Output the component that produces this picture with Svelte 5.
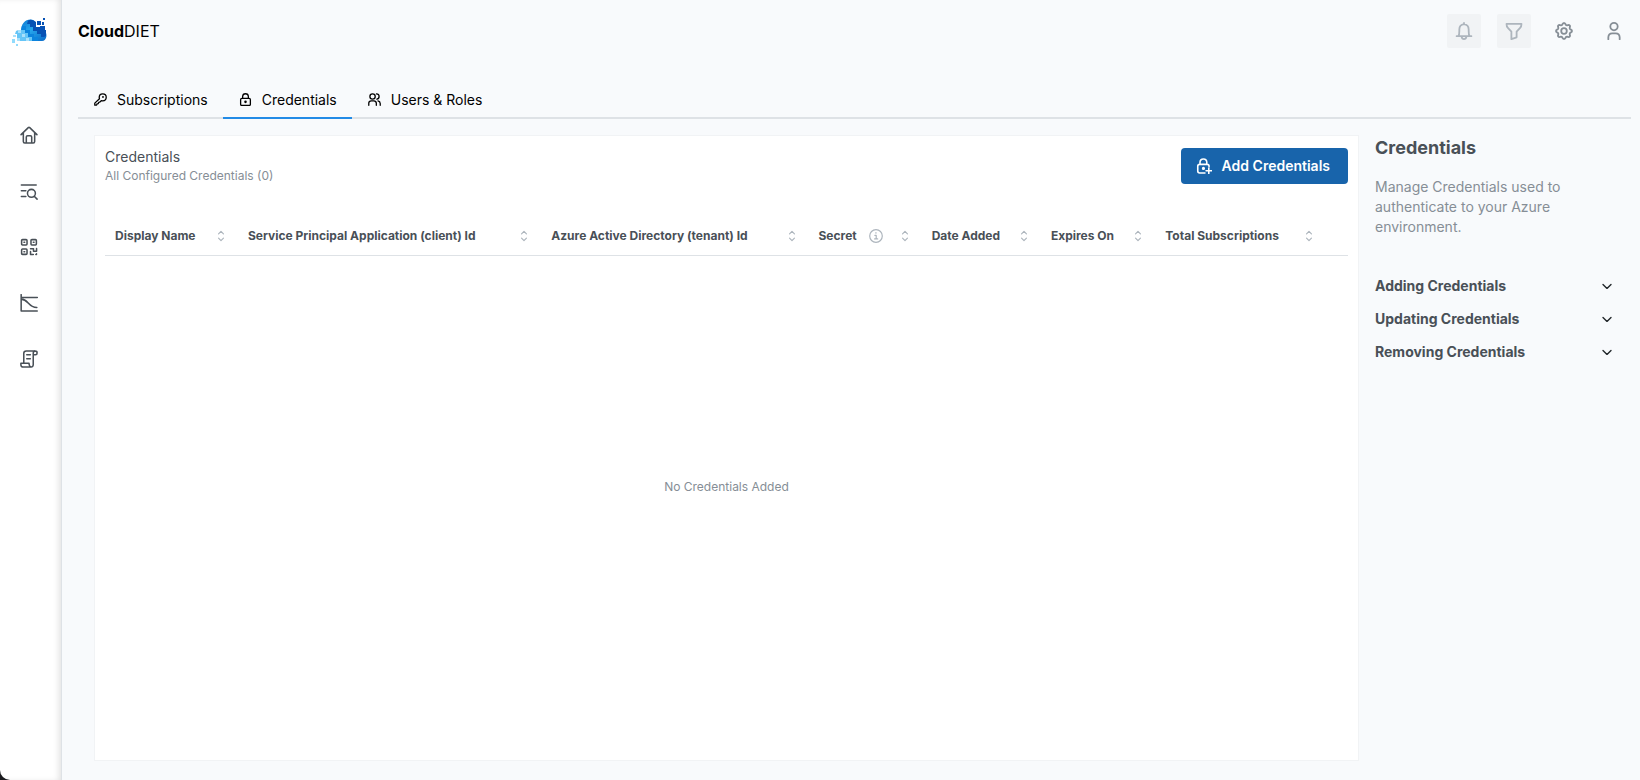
<script>
  const columns = [
    { label: 'Display Name', width: 10.7 },
    { label: 'Service Principal Application (client) Id', width: 24.4 },
    { label: 'Azure Active Directory (tenant) Id', width: 21.5 },
    { label: 'Secret', width: 9.1, info: true },
    { label: 'Date Added', width: 9.6 },
    { label: 'Expires On', width: 9.2 },
    { label: 'Total Subscriptions', width: 13.7 }
  ];
  const tabs = [
    { label: 'Subscriptions', icon: 'key' },
    { label: 'Credentials', icon: 'lock' },
    { label: 'Users & Roles', icon: 'users' }
  ];
  const nav = [
    { label: 'Home', icon: 'home' },
    { label: 'Search', icon: 'search' },
    { label: 'Resources', icon: 'grid' },
    { label: 'Trends', icon: 'trend' },
    { label: 'Reports', icon: 'scroll' }
  ];
  const actions = [
    { label: 'Notifications', icon: 'bell', disabled: true },
    { label: 'Filter', icon: 'funnel', disabled: true },
    { label: 'Settings', icon: 'gear' },
    { label: 'Account', icon: 'user' }
  ];
  const topics = ['Adding Credentials', 'Updating Credentials', 'Removing Credentials'];
  let active = $state('Credentials');

  // Scalloped outline of the settings gear: eight rounded teeth
  const gear = (() => {
    let d = '';
    for (let i = 0; i <= 64; i++) {
      const a = (i / 64) * Math.PI * 2;
      const r = 7.9 + 0.9 * Math.tanh(2 * Math.cos(8 * a));
      d += (i ? 'L' : 'M') + (10 + r * Math.sin(a)).toFixed(2) + ' ' + (10 - r * Math.cos(a)).toFixed(2);
    }
    return d + 'Z';
  })();
</script>

{#snippet icon(name)}
  <svg class="icon {name}" viewBox="0 0 20 20" aria-hidden="true">
    {#if name === 'home'}
      <path d="M1.2 9.6 9.2 1.8Q10 1.1 10.8 1.8L18.8 9.6M3.7 7.6V17.2Q3.7 18.8 5.3 18.8H14.7Q16.3 18.8 16.3 17.2V7.6M7 18.8V12.3Q7 10.8 8.5 10.8H11.5Q13 10.8 13 12.3V18.8" />
    {:else if name === 'search'}
      <path d="M1.5 3.3H18M1.5 9.8H6.5M1.5 16.2H6.5M15.8 15.8 19 19" /><circle cx="12.7" cy="12.6" r="4.4" />
    {:else if name === 'grid'}
      <rect x="1.8" y="1.8" width="6" height="6" rx="1" /><rect x="12.2" y="1.8" width="6" height="6" rx="1" /><rect x="1.8" y="12.2" width="6" height="6" rx="1" />
      <path d="M4.4 4.8H5.2M14.8 4.8H15.6M4.4 15.2H5.2M11.7 12H15V14.6H18.4V11.8M11.7 15V18.3H14.8M18.3 17.6V18.3H17.6" />
    {:else if name === 'trend'}
      <path d="M1.3 .7V18.9H19.2M1.3 3.8H19.2M1.3 5.7C9.5 5.7 8.8 14.9 18.7 15" />
    {:else if name === 'scroll'}
      <path d="M4.2 14.5V3.6Q4.2 1 7 1H16.6M16.8 1Q14.7 1.2 14.7 3.6V16.4Q14.5 19 12.4 19M14.9 5.2H17.3Q19 5.2 19 3.2Q19 1 16.8 1M12.4 19Q10.5 18.8 10.2 16.3L10 14.6H1V16.7Q1.1 19 3.5 19H12.4M7.5 5.3H11.5M7.5 9.7H11.5" />
    {:else if name === 'bell'}
      <path d="M1.8 15.7H18.2M3.8 15.7Q4.8 14.5 4.8 10V8.4Q4.8 3 10 2.4Q15.2 3 15.2 8.4V10Q15.2 14.5 16.2 15.7M7.3 16.2Q7.8 19 10 19Q12.2 19 12.7 16.2M10 1V2.4" />
    {:else if name === 'funnel'}
      <path d="M1.7 2H18.3Q18.4 5 16.8 6.6L12.9 10.8V17L7.1 19V10.8L3.2 6.6Q1.6 5 1.7 2Z" />
    {:else if name === 'gear'}
      <path d={gear} /><circle cx="10" cy="10" r="3.1" />
    {:else if name === 'user'}
      <circle cx="10" cy="5.1" r="4.1" /><path d="M3.7 19.2V17Q3.9 12.8 8 12.7H12Q16.1 12.8 16.3 17V19.2" />
    {:else if name === 'key'}
      <path d="M8 6.8C8 3.4 10.4 1.2 13.4 1.2C16.6 1.2 18.8 3.4 18.8 6.6C18.8 9.8 16.6 12 13.4 12L11.2 11.8 8.6 14.2 7.2 14.4 6.6 16.4 4.6 16.8 4 18.6 1.2 18.8V15.6L8.4 8.8Z" /><circle cx="13.8" cy="6.3" r=".5" />
    {:else if name === 'lock'}
      <rect x="2.5" y="8.2" width="15" height="11" rx="2" /><path d="M5.6 8V5.5C5.8-.3 14.2-.3 14.4 5.5V8" /><circle cx="10" cy="13.6" r="1" />
    {:else if name === 'users'}
      <circle cx="7" cy="5.3" r="4.1" /><path d="M1.2 19V15.5C1.4 12.5 3.5 12 5 12H9C11.5 12 12.6 13.5 12.8 15.5V19M13 1.3C18.2 1 18.4 8.8 13.6 9.4M15.3 12Q18.7 12.8 18.8 16V19" />
    {:else if name === 'lockadd'}
      <path d="M11.2 18.7H4.5Q2.2 18.7 2.2 16.4V10.3Q2.2 8 4.5 8H14Q16.3 8 16.3 10.3V11M5 8V5.4C5.2-.2 13.3-.2 13.5 5.4V8M16 12.6V19.4M12.6 16H19.4" /><circle cx="9.3" cy="13" r="1" />
    {:else if name === 'sort'}
      <path d="M6.5 7 10 3.5 13.5 7M6.5 13 10 16.5 13.5 13" />
    {:else if name === 'info'}
      <circle cx="10" cy="10" r="9" /><path d="M8.3 9H10.3V14M8 14.2H12.4M9.6 5.6H10.2" />
    {:else if name === 'chevron'}
      <path d="M5 8 10 13 15 8" />
    {/if}
  </svg>
{/snippet}

<div class="shell">
  <nav class="sidebar" aria-label="Main">
    <a class="logo" href="#home" aria-label="CloudDIET">
      <svg viewBox="10 16 38 32" aria-hidden="true">
        <defs>
          <linearGradient id="sky" x1="0" y1="0" x2="1" y2="1">
            <stop offset="0" stop-color="#0a73cf" /><stop offset=".45" stop-color="#27a7ed" /><stop offset="1" stop-color="#0869c8" />
          </linearGradient>
        </defs>
        <path fill="url(#sky)" d="M21 31C21 24 25 19.5 30.5 19.5C33 19.5 35 21 36 23L39 27 44 30C48 33 47 41 42 41H25L19 37Z" />
        <path fill="#0752b5" d="M28 20.4Q32 18.6 36 22V23L39 26H44V30H46V36L44 37H41V34H37V31H33V27H30V24H27Z" />
        <path fill="#0c84de" d="M22 26H26V30H30V34H34V37H38V41H32V38H28V34H23V31H21Z" />
        <path fill="#fff" d="M36 18H46V30H40V27H36Z" />
        <path fill="#0752b5" d="M37 21H41V25H37ZM42 22H44V25H42ZM40 26H45V30H40ZM43 18H45V20H43Z" />
        <path fill="#65c5f7" d="M16 31Q18 29.5 21 30H25V33H28V37H32V41H20V38H17V34H15Z" />
        <path fill="#a9e0fb" d="M18 30H21V33H18ZM22 34H25V37H22ZM17 38H20V41H17ZM26 38H29V41H26ZM13 35H16V37H13Z" />
        <path fill="#91dbfc" d="M12 39H15V43H12ZM16 44H18V46H16Z" />
      </svg>
    </a>
    <div class="links">
      {#each nav as item}
        <a href="#{item.icon}" aria-label={item.label}>{@render icon(item.icon)}</a>
      {/each}
    </div>
  </nav>

  <div class="page">
    <header>
      <h1>Cloud<span>DIET</span></h1>
      <div class="actions">
        {#each actions as action}
          <button type="button" aria-label={action.label} disabled={action.disabled}>{@render icon(action.icon)}</button>
        {/each}
      </div>
    </header>

    <div class="tabs" role="tablist">
      {#each tabs as tab}
        <button type="button" role="tab" aria-selected={active === tab.label} onclick={() => (active = tab.label)}>
          {@render icon(tab.icon)}{tab.label}
        </button>
      {/each}
    </div>

    <div class="content">
      <main>
        <div class="top">
          <div>
            <h2>Credentials</h2>
            <p>All Configured Credentials (0)</p>
          </div>
          <button class="add" type="button">{@render icon('lockadd')}Add Credentials</button>
        </div>
        <table>
          <colgroup>
            {#each columns as col}<col style="width: {col.width}%" />{/each}
            <col />
          </colgroup>
          <thead>
            <tr>
              {#each columns as col}
                <th scope="col">
                  <div class="head">
                    <span>{col.label}</span>
                    {#if col.info}{@render icon('info')}{/if}
                    <button type="button" aria-label="Sort by {col.label}">{@render icon('sort')}</button>
                  </div>
                </th>
              {/each}
              <td></td>
            </tr>
          </thead>
        </table>
        <div class="empty">No Credentials Added</div>
      </main>

      <aside>
        <h2>Credentials</h2>
        <p>Manage Credentials used to authenticate to your Azure environment.</p>
        <div class="topics">
          {#each topics as topic}
            <button type="button" aria-expanded="false">{topic}{@render icon('chevron')}</button>
          {/each}
        </div>
      </aside>
    </div>
  </div>
</div>

<style>
  :global(body) {
    background: #f8fafc;
  }
  .shell {
    display: flex;
    min-height: 100vh;
    font-family: Inter, 'Liberation Sans', sans-serif;
    font-size: 14px;
    line-height: 20px;
    color: #495057;
    background: linear-gradient(90deg, #1a1b1e 20px, #f8fafc 20px);
  }
  h1, h2, p {
    margin: 0;
  }
  button {
    font: inherit;
    color: inherit;
    border: 0;
    padding: 0;
    background: none;
    cursor: pointer;
  }
  .icon {
    display: block;
    flex: none;
    width: 18px;
    height: 18px;
    fill: none;
    stroke: currentColor;
    stroke-width: 1.7;
    stroke-linecap: round;
    stroke-linejoin: round;
  }
  .sidebar {
    box-sizing: border-box;
    flex: none;
    width: 62px;
    background: #fff;
    border-right: 1px solid #dee2e6;
    border-bottom-left-radius: 10px;
    box-shadow: inset -4px 0 6px -2px #0000001f;
  }
  .logo {
    display: block;
    padding: 16px 10px 0;
  }
  .logo svg {
    display: block;
    width: 38px;
    height: 32px;
  }
  .links {
    display: flex;
    flex-direction: column;
    gap: 38px;
    padding: 78px 0 0 20px;
  }
  .links a {
    color: #495057;
    width: 18px;
  }
  .page {
    flex: 1;
    min-width: 0;
    display: flex;
    flex-direction: column;
    padding: 0 9px 19px 16px;
  }
  header {
    display: flex;
    align-items: center;
    justify-content: space-between;
    height: 62px;
  }
  h1 {
    font-size: 16px;
    font-weight: 700;
    color: #000;
  }
  h1 span {
    font-weight: 400;
  }
  .actions {
    display: flex;
    gap: 16px;
  }
  .actions button {
    display: grid;
    place-items: center;
    width: 34px;
    height: 34px;
    border-radius: 2px;
    color: #868e96;
  }
  .actions button:disabled {
    background: #f1f3f5;
    color: #adb5bd;
  }
  .actions .icon {
    stroke-width: 2;
  }
  .tabs {
    display: flex;
    margin-top: 20px;
    border-bottom: 2px solid #dee2e6;
  }
  .tabs button {
    display: flex;
    align-items: center;
    gap: 10px;
    height: 37px;
    padding: 0 15px 0 16px;
    margin-bottom: -2px;
    border-bottom: 2px solid transparent;
    color: #000;
  }
  .tabs button[aria-selected='true'] {
    border-color: #228be6;
  }
  .tabs .icon {
    width: 13px;
    height: 13px;
    stroke-width: 2;
  }
  .content {
    flex: 1;
    display: flex;
    gap: 16px;
    padding: 16px 16px 0;
  }
  main {
    flex: 1;
    display: flex;
    flex-direction: column;
    padding: 12px 10px;
    background: #fff;
    border: 1px solid #f1f3f5;
  }
  .top {
    display: flex;
    justify-content: space-between;
    align-items: flex-start;
  }
  .top h2 {
    font-size: 14px;
    font-weight: 400;
    line-height: 18px;
  }
  .top p {
    font-size: 12px;
    line-height: 20px;
    color: #868e96;
  }
  .add {
    display: flex;
    align-items: center;
    gap: 10px;
    height: 36px;
    padding: 0 18px 0 15px;
    border-radius: 4px;
    background: #1864ab;
    color: #fff;
    font-weight: 600;
  }
  .add .icon {
    width: 16px;
    height: 16px;
    stroke-width: 2;
  }
  table {
    width: 100%;
    margin-top: 30px;
    table-layout: fixed;
    border-collapse: collapse;
    font-size: 12px;
  }
  th {
    padding: 10px 10px 9px;
    text-align: left;
    font-weight: 700;
  }
  tr {
    border-bottom: 1px solid #dee2e6;
  }
  .head {
    display: flex;
    align-items: center;
    white-space: nowrap;
  }
  .head .info {
    width: 14px;
    height: 14px;
    margin-left: 12px;
    color: #adb5bd;
  }
  .head button {
    margin-left: auto;
  }
  .head .sort {
    width: 14px;
    height: 14px;
    color: #adb5bd;
  }
  .empty {
    flex: 1;
    display: grid;
    place-items: center;
    padding-bottom: 30px;
    font-size: 12px;
    color: #868e96;
  }
  aside {
    flex: none;
    width: 240px;
  }
  aside h2 {
    font-size: 18px;
    font-weight: 700;
    line-height: 26px;
  }
  aside p {
    margin-top: 16px;
    padding-right: 40px;
    color: #868e96;
  }
  .topics {
    display: flex;
    flex-direction: column;
    gap: 13px;
    margin-top: 39px;
  }
  .topics button {
    display: flex;
    align-items: center;
    justify-content: space-between;
    font-weight: 700;
  }
  .topics .icon {
    width: 16px;
    height: 16px;
    color: #212529;
  }
</style>
